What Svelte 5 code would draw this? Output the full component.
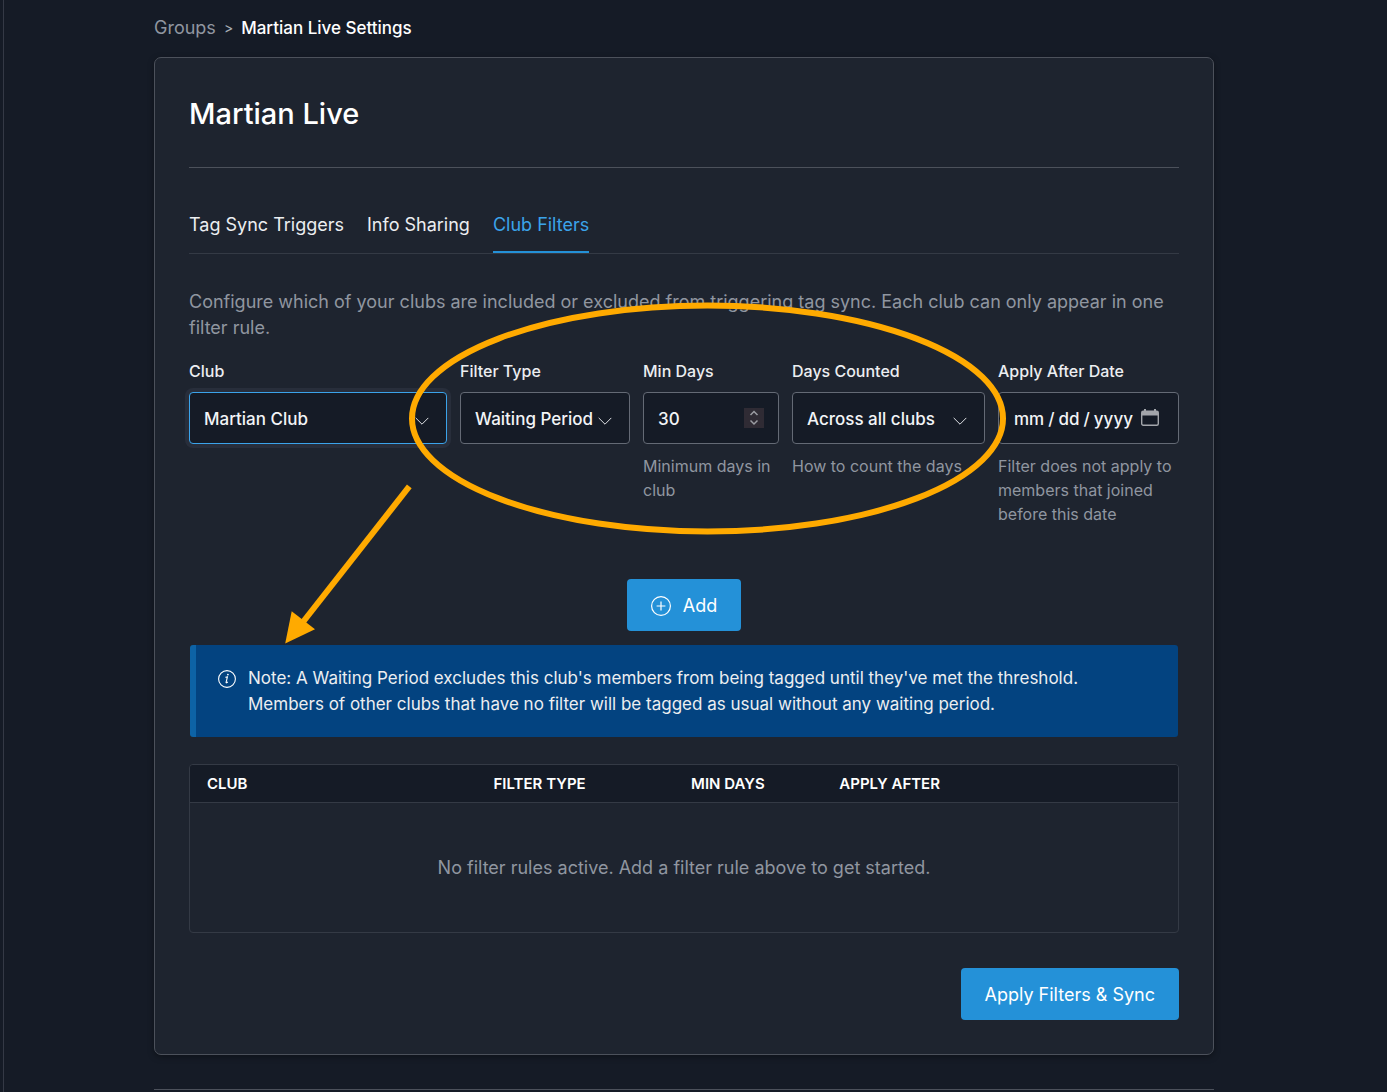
<script lang="ts">
  type Rule = {
    club: string
    filterType: string
    minDays: number
    applyAfter: string
  }

  const tabs = ['Tag Sync Triggers', 'Info Sharing', 'Club Filters']
  let activeTab = $state('Club Filters')

  let club = $state('Martian Club')
  let filterType = $state('Waiting Period')
  let minDays = $state(30)
  let daysCounted = $state('Across all clubs')
  let applyAfter = $state('')

  let rules: Rule[] = $state([])

  // A club can only appear in one rule, so adding it again replaces it.
  const addRule = () => {
    rules = [
      ...rules.filter((rule) => rule.club !== club),
      {club, filterType, minDays, applyAfter},
    ]
  }
</script>

{#snippet chevron()}
  <svg class="chevron" viewBox="0 0 14 8" aria-hidden="true">
    <path d="M0.7 0.9 7 7.2 13.3 0.9" />
  </svg>
{/snippet}

<div class="shell">
  <main>
    <nav class="breadcrumb" aria-label="Breadcrumb">
      <a href="#groups">Groups</a>
      <span class="separator">&gt;</span>
      <span class="current">Martian Live Settings</span>
    </nav>

    <section class="card">
      <h1>Martian Live</h1>

      <div class="tabs" role="tablist">
        {#each tabs as tab}
          <button
            type="button"
            role="tab"
            class={['tab', tab === activeTab && 'active']}
            aria-selected={tab === activeTab}
            onclick={() => (activeTab = tab)}>{tab}</button
          >
        {/each}
      </div>

      <div class="panel">
        <p class="intro">
          Configure which of your clubs are included or excluded from triggering
          tag sync. Each club can only appear in one filter rule.
        </p>

        <div class="fields">
          <div class="field">
            <label for="club">Club</label>
            <div class="control">
              <select id="club" class="highlighted" bind:value={club}>
                <option>Martian Club</option>
              </select>
              {@render chevron()}
            </div>
          </div>

          <div class="field">
            <label for="filter-type">Filter Type</label>
            <div class="control">
              <select id="filter-type" bind:value={filterType}>
                <option>Waiting Period</option>
              </select>
              {@render chevron()}
            </div>
          </div>

          <div class="field">
            <label for="min-days">Min Days</label>
            <div class="control">
              <input id="min-days" type="number" min="0" bind:value={minDays} />
              <svg class="spinner" viewBox="0 0 20 20" aria-hidden="true">
                <path d="M6.5 7 10 3.5 13.5 7M6.5 12.5 10 16 13.5 12.5" />
              </svg>
            </div>
            <p class="help">Minimum days in club</p>
          </div>

          <div class="field">
            <label for="days-counted">Days Counted</label>
            <div class="control">
              <select id="days-counted" bind:value={daysCounted}>
                <option>Across all clubs</option>
              </select>
              {@render chevron()}
            </div>
            <p class="help">How to count the days</p>
          </div>

          <div class="field">
            <label for="apply-after">Apply After Date</label>
            <div class="control">
              <input id="apply-after" type="date" bind:value={applyAfter} />
              <svg class="calendar" viewBox="0 0 18 18" aria-hidden="true">
                <rect x="0.7" y="2.2" width="16.6" height="14.1" rx="1.5" />
                <path class="top" d="M1 2h16v4.5H1zM3 0h2v3h-2zM13 0h2v3h-2z" />
              </svg>
            </div>
            <p class="help">
              Filter does not apply to members that joined before this date
            </p>
          </div>
        </div>

        <button type="button" class="primary add" onclick={addRule}>
          <svg viewBox="0 0 20 20" aria-hidden="true">
            <circle cx="10" cy="10" r="9.4" />
            <path d="M10 5.6v8.8M5.6 10h8.8" />
          </svg>
          Add
        </button>

        <!-- Points from the waiting period fields to the note below them. -->
        <svg class="callout" viewBox="0 0 990 400" aria-hidden="true">
          <ellipse cx="518.5" cy="164.5" rx="295.5" ry="113" />
          <path class="shaft" d="M220.3 232.4 114 368" />
          <path class="head" d="M96.2 389.5 102.7 357.2 126 375.3Z" />
        </svg>
      </div>

      <div class="note" role="note">
        <svg viewBox="0 0 18 18" aria-hidden="true">
          <circle cx="9" cy="9" r="8.4" />
          <path d="M7.4 7.4c.7-.2 1.3-.4 2-.5L8.1 12.3c-.2.8.7.7 1.7-.4" />
          <circle class="dot" cx="9.9" cy="4.6" r="0.9" />
        </svg>
        <p>
          Note: A Waiting Period excludes this club's members from being tagged
          until they've met the threshold. Members of other clubs that have no
          filter will be tagged as usual without any waiting period.
        </p>
      </div>

      <div class="table-frame">
        <table>
          <thead>
            <tr>
              <th class="col-club">Club</th>
              <th class="col-type">Filter Type</th>
              <th class="col-days">Min Days</th>
              <th>Apply After</th>
            </tr>
          </thead>
          <tbody>
            {#each rules as rule}
              <tr>
                <td>{rule.club}</td>
                <td>{rule.filterType}</td>
                <td>{rule.minDays}</td>
                <td>{rule.applyAfter}</td>
              </tr>
            {:else}
              <tr>
                <td class="empty" colspan="4">
                  No filter rules active. Add a filter rule above to get started.
                </td>
              </tr>
            {/each}
          </tbody>
        </table>
      </div>

      <div class="actions">
        <button type="button" class="primary">Apply Filters &amp; Sync</button>
      </div>
    </section>

    <hr />
  </main>
</div>

<style>
  :global(body) {
    background: #151b26;
  }

  .shell {
    --page: #151b26;
    --surface: #1e242f;
    --line: #4c515b;
    --line-soft: #343a45;
    --text: #eceef1;
    --muted: #9096a0;
    --blue: #2491d8;

    box-sizing: border-box;
    min-height: 100vh;
    margin-left: 3px;
    padding: 0 23px 0 0;
    border-left: 1px solid #343945;
    background: var(--page);
    color: var(--text);
    font-family: Inter, 'Liberation Sans', sans-serif;
    font-size: 18px;
    line-height: 26px;
    color-scheme: dark;
  }

  main {
    max-width: 1060px;
    margin: 0 auto;
    padding-top: 15px;
  }

  .breadcrumb {
    display: flex;
    align-items: center;
    gap: 8px;
    margin-bottom: 16px;
  }

  .breadcrumb a {
    color: var(--muted);
    text-decoration: none;
  }

  .separator {
    color: #a9aeb6;
    font-size: 14px;
  }

  .current {
    color: #fff;
    font-size: 17px;
    font-weight: 500;
  }

  .card {
    padding: 34px;
    border: 1px solid var(--line);
    border-radius: 7px;
    background: var(--surface);
    box-shadow: 0 2px 6px rgb(0 0 0 / 0.35);
  }

  h1 {
    margin: 0 0 32px;
    padding-bottom: 31px;
    border-bottom: 1px solid var(--line);
    color: #fff;
    font-size: 29px;
    font-weight: 500;
    line-height: 44px;
  }

  .tabs {
    display: flex;
    gap: 23px;
    border-bottom: 1px solid var(--line-soft);
  }

  .tab {
    padding: 12px 0 13px;
    border: 0;
    border-bottom: 2px solid transparent;
    background: none;
    color: var(--text);
    font: inherit;
    cursor: pointer;
  }

  .tab.active {
    border-color: var(--blue);
    color: #3ba3ea;
  }

  .panel {
    position: relative;
    padding-top: 35px;
  }

  .intro {
    margin: 0 0 18px;
    color: var(--muted);
  }

  .fields {
    display: grid;
    grid-template-columns:
      minmax(0, 258fr) minmax(0, 170fr) minmax(0, 136fr) minmax(0, 193fr)
      minmax(0, 181fr);
    gap: 13px;
  }

  label {
    display: block;
    margin-bottom: 9px;
    font-size: 16px;
    font-weight: 500;
    line-height: 24px;
  }

  .control {
    position: relative;
  }

  select,
  input {
    appearance: none;
    display: block;
    box-sizing: border-box;
    width: 100%;
    height: 52px;
    padding: 2px 14px 0;
    border: 1px solid #646a75;
    border-radius: 4px;
    background: var(--page);
    color: #f2f4f6;
    font: inherit;
    font-size: 17px;
    font-weight: 500;
  }

  select.highlighted {
    border-color: #3ba3ea;
    box-shadow: 0 0 0 4px #282e3b;
  }

  /* The native parts stay clickable under the drawn icons. */
  ::-webkit-inner-spin-button,
  ::-webkit-calendar-picker-indicator {
    opacity: 0;
  }

  ::-webkit-datetime-edit-text {
    padding: 0 3px;
  }

  .chevron,
  .spinner,
  .calendar {
    position: absolute;
    fill: none;
    pointer-events: none;
  }

  .chevron {
    top: 25px;
    right: 18px;
    width: 14px;
    height: 8px;
    stroke: #dfe2e6;
  }

  .spinner {
    top: 16px;
    right: 15px;
    width: 20px;
    height: 20px;
    background: #2f2b34;
    stroke: #9a9ca2;
    stroke-width: 1.5;
  }

  .calendar {
    top: 17px;
    right: 20px;
    width: 18px;
    height: 18px;
    stroke: #a3a6ab;
    stroke-width: 1.4;
  }

  .calendar .top {
    fill: #a3a6ab;
    stroke: none;
  }

  .help {
    margin: 10px 0 0;
    color: var(--muted);
    font-size: 16px;
    line-height: 24px;
  }

  .primary {
    display: flex;
    align-items: center;
    gap: 12px;
    height: 52px;
    padding: 1px 24px 0;
    border: 0;
    border-radius: 4px;
    background: var(--blue);
    color: #fff;
    font: inherit;
    cursor: pointer;
  }

  .add {
    margin: 53px auto 14px;
  }

  .add svg {
    width: 20px;
    height: 20px;
    fill: none;
    stroke: #fff;
    stroke-width: 1.2;
  }

  .callout {
    position: absolute;
    top: 0;
    left: 0;
    width: 100%;
    fill: none;
    stroke: #ffaa00;
    stroke-width: 6;
    pointer-events: none;
  }

  .callout .head {
    fill: #ffaa00;
    stroke: none;
  }

  .note {
    display: flex;
    gap: 12px;
    margin: 0 1px 27px;
    padding: 20px 96px 20px 22px;
    border-left: 6px solid #0d63a6;
    border-radius: 3px;
    background: #034380;
    font-size: 17px;
  }

  .note p {
    margin: 0;
  }

  .note svg {
    flex: none;
    width: 18px;
    height: 18px;
    margin-top: 5px;
    fill: none;
    stroke: #fff;
    stroke-width: 1.1;
  }

  .note .dot {
    fill: #fff;
    stroke: none;
  }

  .table-frame {
    overflow: hidden;
    border: 1px solid var(--line-soft);
    border-radius: 4px;
  }

  table {
    width: 100%;
    border-collapse: collapse;
    table-layout: fixed;
  }

  th {
    padding: 6px 17px 5px;
    border-bottom: 1px solid var(--line-soft);
    background: var(--page);
    color: #fff;
    font-size: 15px;
    font-weight: 600;
    text-align: left;
    text-transform: uppercase;
  }

  .col-club {
    width: 29%;
    box-sizing: border-box;
  }

  .col-type {
    width: 20%;
    box-sizing: border-box;
  }

  .col-days {
    width: 15%;
    box-sizing: border-box;
  }

  td {
    padding: 12px 17px;
    font-size: 17px;
  }

  .empty {
    padding: 52px 17px 51px;
    color: var(--muted);
    font-size: 18px;
    text-align: center;
  }

  .actions {
    display: flex;
    justify-content: flex-end;
    margin-top: 35px;
  }

  hr {
    margin: 34px 0 0;
    border: 0;
    border-top: 1px solid var(--line);
  }
</style>
